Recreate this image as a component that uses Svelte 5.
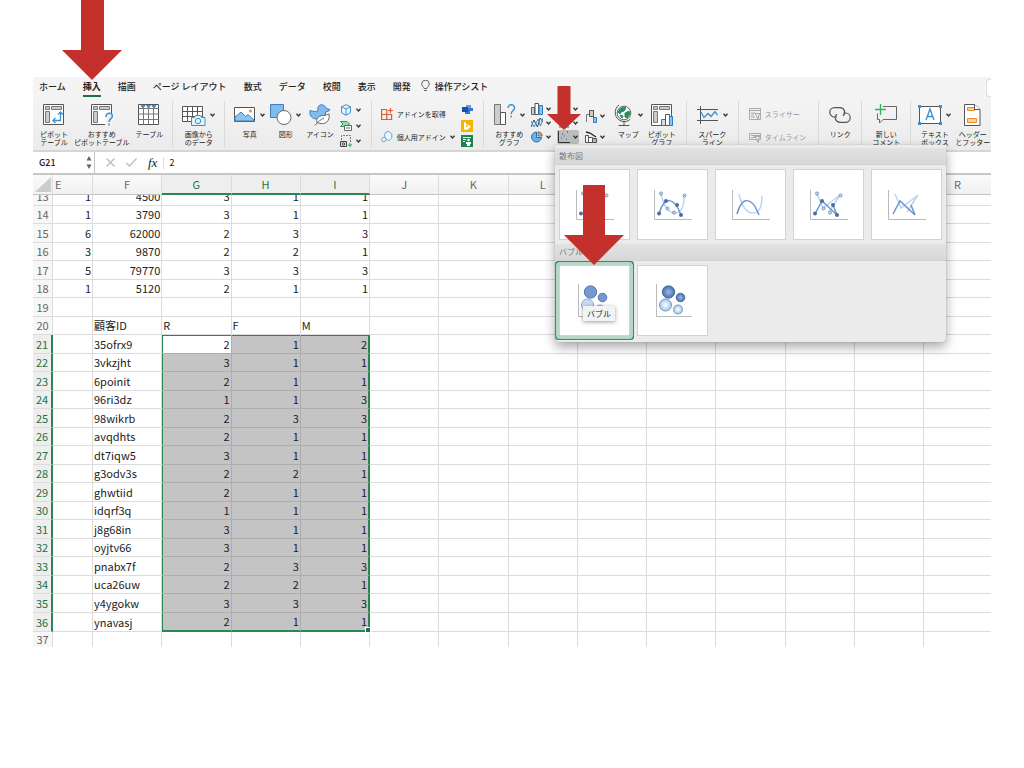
<script lang="ts">
  interface SheetRow {
    n: number;
    cells: (string | number)[];
  }

  const tabs = ['ホーム', '挿入', '描画', 'ページ レイアウト', '数式', 'データ', '校閲', '表示', '開発'];
  const columns = ['E', 'F', 'G', 'H', 'I', 'J', 'K', 'L', 'M', 'N', 'O', 'P', 'Q', 'R'];

  const rows: SheetRow[] = [
    { n: 13, cells: [1, 4500, 3, 1, 1] },
    { n: 14, cells: [1, 3790, 3, 1, 1] },
    { n: 15, cells: [6, 62000, 2, 3, 3] },
    { n: 16, cells: [3, 9870, 2, 2, 1] },
    { n: 17, cells: [5, 79770, 3, 3, 3] },
    { n: 18, cells: [1, 5120, 2, 1, 1] },
    { n: 19, cells: [] },
    { n: 20, cells: ['', '顧客ID', 'R', 'F', 'M'] },
    { n: 21, cells: ['', '35ofrx9', 2, 1, 2] },
    { n: 22, cells: ['', '3vkzjht', 3, 1, 1] },
    { n: 23, cells: ['', '6poinit', 2, 1, 1] },
    { n: 24, cells: ['', '96ri3dz', 1, 1, 3] },
    { n: 25, cells: ['', '98wikrb', 2, 3, 3] },
    { n: 26, cells: ['', 'avqdhts', 2, 1, 1] },
    { n: 27, cells: ['', 'dt7iqw5', 3, 1, 1] },
    { n: 28, cells: ['', 'g3odv3s', 2, 2, 1] },
    { n: 29, cells: ['', 'ghwtiid', 2, 1, 1] },
    { n: 30, cells: ['', 'idqrf3q', 1, 1, 1] },
    { n: 31, cells: ['', 'j8g68in', 3, 1, 1] },
    { n: 32, cells: ['', 'oyjtv66', 3, 1, 1] },
    { n: 33, cells: ['', 'pnabx7f', 2, 3, 3] },
    { n: 34, cells: ['', 'uca26uw', 2, 2, 1] },
    { n: 35, cells: ['', 'y4ygokw', 3, 3, 3] },
    { n: 36, cells: ['', 'ynavasj', 2, 1, 1] },
    { n: 37, cells: [] },
  ];

  const scatterTypes = ['markers', 'smooth-markers', 'smooth', 'lines-markers', 'lines'];

  // selection is G21:I36
  const range = { top: 21, bottom: 36, left: 2, right: 4 };

  let activeTab = $state('挿入');
  let nameBox = $state('G21');
  let formula = $state('2');
  let bubble = $state('bubble');

  const inRows = (n: number) => n >= range.top && n <= range.bottom;
  const inCols = (c: number) => c >= range.left && c <= range.right;
</script>

{#snippet caret()}
  <svg width="5" height="4" viewBox="0 0 5 4" aria-hidden="true">
    <path d="M.5 .8 2.5 3 4.5 .8" fill="none" stroke="#333" stroke-width="1.3" />
  </svg>
{/snippet}

{#snippet icon(name: string)}
  {#if name === 'pivot' || name === 'pivot-help'}
    <svg width="22" height="22" viewBox="0 0 22 22" fill="none" stroke="#555">
      <path d="M.5 .5h20v20H.5z" fill="#fff" />
      <path d="M2.5 2.5h4v3h-4zM8.5 2.5h10v3h-10zM2.5 7.5h4v11h-4z" fill="#ccc" stroke="#777" />
      {#if name === 'pivot'}
        <path d="M17.5 8v8.5H10M15 10.5 17.5 8l2.5 2.5M12.5 14 10 16.5l2.5 2.5" stroke="#3c91d2" stroke-width="1.3" />
      {:else}
        <path d="M14 9h8v13h-8z" fill="#f2f2f2" stroke="none" />
        <path d="M15 13c0-5.5 7-4.5 6.3-.5-.5 2.5-3.3 2.5-3.3 5.500m0 1.500v2" stroke="#3c91d2" stroke-width="1.5" />
      {/if}
    </svg>
  {:else if name === 'table'}
    <svg width="22" height="22" viewBox="0 0 22 22" fill="none" stroke="#555">
      <path d="M.5 .5h20v20H.5z" fill="#fff" />
      <path d="M.5 4.5h20M.5 10h20M.5 15.5h20M5.5 4.5v16M10.5 4.5v16M15.5 4.5v16" stroke="#777" />
      <path d="M3 1.5h4L5 4zM8.5 1.5h4l-2 2.5zM14 1.5h4L16 4z" fill="#3c91d2" stroke="#3c91d2" />
    </svg>
  {:else if name === 'camera'}
    <svg width="24" height="22" viewBox="0 0 24 22" fill="none" stroke="#555">
      <path d="M.5 2.5h20v15H.5z" fill="#fff" />
      <path d="M.5 7.5h20M.5 12.5h20M5.5 2.5v15M10.5 2.5v15M15.5 2.5v15" />
      <path d="M9.5 13.5h3l1-2h5l1 2H23v8H9.5z" fill="#e4f2fc" stroke="#3c91d2" />
      <circle cx="16" cy="17" r="2.7" stroke="#3c91d2" />
    </svg>
  {:else if name === 'photo'}
    <svg width="22" height="22" viewBox="0 0 22 22">
      <path d="M.5 3.5h20v14H.5z" fill="#fff" stroke="#555" />
      <path d="m1 13 6-5 4.5 4.5L14 10.5l6 5.5v1H1z" fill="#8cc4f0" stroke="#3c80bd" />
      <circle cx="16.5" cy="7" r="1.5" fill="#f08a34" />
    </svg>
  {:else if name === 'shapes'}
    <svg width="22" height="22" viewBox="0 0 22 22">
      <path d="M.5 .5h13v13H.5z" fill="#7fbdf0" stroke="#3c80bd" />
      <circle cx="14" cy="13.5" r="7" fill="#fff" stroke="#666" />
    </svg>
  {:else if name === 'duck'}
    <svg width="22" height="22" viewBox="0 0 22 22">
      <path d="M1 6.5c3 1 6 1.5 8 .5C8 2 11-.3 14.5 1.3c2 1 2.5 2 2.5 3.2l4 1c-1 2-2.500 2-4.500 2.500C17 14 12 16 7 15 1.5 14 .5 11 1 6.5z" fill="#7fbdf0" stroke="#3c80bd" />
      <path d="M8 18.500c-1.500-5 3-7 6.500-7 2 0 4-1 5.500-1.500 1.500 7-4 12-12 8.500z" fill="#fff" stroke="#666" />
      <path d="M6 21.500c3-4 6-6 9-7.500" fill="none" stroke="#666" />
    </svg>
  {:else if name === 'cube'}
    <svg width="12" height="12" viewBox="0 0 12 12" fill="#eaf5fd" stroke="#3c91d2">
      <path d="m6 .7 4.500 2v6L6 11.300 1.500 8.700v-6zM1.500 2.700 6 5l4.500-2.300M6 5v6" />
    </svg>
  {:else if name === 'smartart'}
    <svg width="12" height="12" viewBox="0 0 12 12">
      <path d="M.5 1.5H7L9.5 4 7 6.5H.5L3 4z" fill="#9bd8ae" stroke="#2f9b58" />
      <path d="M4.5 5.5h7v5h-7zM6 8h4" fill="#fff" stroke="#666" />
    </svg>
  {:else if name === 'screenshot'}
    <svg width="12" height="12" viewBox="0 0 12 12" fill="none">
      <path d="M1.5 5V.5h9V7" stroke="#777" stroke-dasharray="2 1" />
      <path d="M.5 6.5h6v5h-6z" fill="#ddd" stroke="#444" />
      <circle cx="3.5" cy="9" r="1.2" stroke="#444" />
      <path d="M10 8v4M8 10h4" stroke="#35a653" />
    </svg>
  {:else if name === 'store'}
    <svg width="12" height="12" viewBox="0 0 12 12" fill="none" stroke="#dc5a34" stroke-width="1.2">
      <path d="M6 1.5H.6v10h10V6.5H.6M5.8 1.5v10M9.5 0v5M7 2.5h5" />
    </svg>
  {:else if name === 'my-addins'}
    <svg width="12" height="12" viewBox="0 0 12 12" fill="#edf7fe" stroke="#62acdf">
      <path d="m5 1 3-.5L10.800 3v4L8 9.500 4.500 8 3.500 4z" />
      <circle cx="2.8" cy="8.5" r="2.2" />
    </svg>
  {:else if name === 'visio'}
    <svg width="12" height="12" viewBox="0 0 12 12">
      <path d="M5 1h5v4H5z" fill="#5f9be6" />
      <path d="M7 4h5v3H7zM4 7h5v3H4z" fill="#3973cf" />
      <path d="M1 3h6v5H1z" fill="#1e4faa" />
    </svg>
  {:else if name === 'bing'}
    <svg width="12" height="12" viewBox="0 0 12 12">
      <path d="M0 0h12v12H0z" fill="#f4b400" />
      <path d="m3 2 2 .7v4.500L7.500 6 5.500 5l-.5-1 4.500 1.800v1.700L5 10.300 3 9z" fill="#fff" />
    </svg>
  {:else if name === 'people'}
    <svg width="12" height="12" viewBox="0 0 12 12">
      <path d="M0 0h12v12H0z" fill="#1d8451" />
      <path d="M2 2.500h8M2 4.500h3M2 6.500h2" stroke="#fff" />
      <circle cx="7.5" cy="5" r="1.3" fill="#fff" />
      <path d="M5 7h5v2H9v2H6V9H5z" fill="#fff" />
    </svg>
  {:else if name === 'chart-help'}
    <svg width="22" height="22" viewBox="0 0 22 22" fill="none">
      <path d="M.5 .5h6v20h-6z" fill="#ccc" stroke="#777" />
      <path d="M6.5 8.5h5v12h-5z" fill="#fff" stroke="#555" />
      <path d="M14 4c0-4.500 7-4 6.500 0-.3 3-3.300 2.500-3.300 6m0 1.500v2" stroke="#3c91d2" stroke-width="1.4" />
    </svg>
  {:else if name === 'bars'}
    <svg width="12" height="12" viewBox="0 0 12 12">
      <path d="M.5 4.5h3v7h-3z" fill="#ccc" stroke="#666" />
      <path d="M4 .5h3.500v11H4z" fill="#fff" stroke="#555" />
      <path d="M8 2.5h3.500v9H8z" fill="#8cc4f0" stroke="#2d7dc2" />
    </svg>
  {:else if name === 'line'}
    <svg width="12" height="12" viewBox="0 0 12 12" fill="none">
      <path d="m0 10 3-7 3.500 7L9 1l3 4" stroke="#444" />
      <path d="m0 4 3 6 4-8 2.500 7L12 1" stroke="#3c91d2" />
    </svg>
  {:else if name === 'pie'}
    <svg width="12" height="12" viewBox="0 0 12 12" stroke="#2d6ea8">
      <path d="M5.5 1A5 5 0 1 0 10.500 6.500h-5z" fill="#68b2ee" />
      <path d="M7 .7A4.500 4.500 0 0 1 11.300 5H7z" fill="#aaa" stroke="#777" />
    </svg>
  {:else if name === 'area'}
    <svg width="12" height="12" viewBox="0 0 12 12">
      <path d="M1 1h10v10H1z" fill="#68b2ee" />
    </svg>
  {:else if name === 'scatter'}
    <svg width="12" height="12" viewBox="0 0 12 12" fill="none">
      <path d="M.5 0v11.500H12" stroke="#333" />
      <path d="M3 7h1M6 5h1M8 8h1" stroke="#3c91d2" stroke-width="1.5" />
      <path d="M4 3h1M9 1h1" stroke="#333" />
    </svg>
  {:else if name === 'waterfall'}
    <svg width="12" height="13" viewBox="0 0 12 13">
      <path d="M1.500 12V4.500h3" fill="none" stroke="#777" />
      <path d="M4.500 .5h4v6h-4z" fill="#ccc" stroke="#555" />
      <path d="M8.500 .5v12" stroke="#555" />
      <path d="M8.500 7.500h3v5h-3z" fill="#8cc4f0" stroke="#2d7dc2" />
    </svg>
  {:else if name === 'combo'}
    <svg width="12" height="12" viewBox="0 0 12 12" fill="#fff" stroke="#555">
      <path d="M.5 4.500h3v7h-3zM3.500 6.500h4v5h-4z" />
      <path d="M7.500 7.500h4v4h-4z" fill="#8cc4f0" />
      <path d="m1 1 4 1 6 4" fill="none" stroke="#222" stroke-width="1.3" />
    </svg>
  {:else if name === 'globe'}
    <svg width="20" height="22" viewBox="0 0 20 22" fill="none">
      <circle cx="10" cy="9" r="6.8" fill="#fff" stroke="#666" />
      <path d="M6 5c2-2 5-2 6-1l-2 3-3 1-1 2-2-2zM11 9l4-2 1 3-3 4-2-1zM6 11l3 1-1 2z" fill="#23905a" stroke="#23905a" />
      <path d="M5 1C-1 5 0 16 9 17.500c3 .4 5-.5 7-2M10 18v3M4.500 21.500h11" stroke="#555" />
    </svg>
  {:else if name === 'pivot-chart'}
    <svg width="22" height="22" viewBox="0 0 22 22">
      <path d="M.5 .5h20v21H.5z" fill="#fff" stroke="#555" />
      <path d="M2.5 2.5h4v3h-4zM8.5 2.5h10v3h-10zM2.5 7.5h4v11h-4z" fill="#ccc" stroke="#777" />
      <path d="M10.500 15.500h4v6h-4z" fill="#ddd" stroke="#666" />
      <path d="M14.500 10.500h4v11h-4z" fill="#fff" stroke="#555" />
      <path d="M18.500 12.500h3v9h-3z" fill="#8cc4f0" stroke="#2d7dc2" />
    </svg>
  {:else if name === 'sparkline'}
    <svg width="22" height="22" viewBox="0 0 22 22" fill="none">
      <path d="M3.500 2v18M0 5.500h21M0 16.500h21" stroke="#555" />
      <path d="m4 8 3 5.500 4-4 3 3 4-5 2.500 3.500" stroke="#3c91d2" stroke-width="1.3" />
    </svg>
  {:else if name === 'slicer' || name === 'timeline'}
    <svg width="12" height="12" viewBox="0 0 12 12" fill="none" stroke="#aaa">
      {#if name === 'slicer'}
        <path d="M.5 .5h11v11H.5zM.5 2.500h11M2 5h4M2 7h3M2 9h4" />
      {:else}
        <path d="M.5 2.500h11v6H.5zM2 4.500h9M2 6.500h4" />
      {/if}
      <path d="M5.500 5.500h6L9.500 8v3.500L8 10V8z" fill="#eee" />
    </svg>
  {:else if name === 'link'}
    <svg width="22" height="22" viewBox="0 0 22 22" fill="none" stroke="#555" stroke-width="1.2">
      <path d="M8 13H5.500a4.700 4.700 0 0 1 0-9.400h5.500a4.700 4.700 0 0 1 3 8.300" />
      <path d="M14.500 9h2a4.700 4.700 0 0 1 0 9.400H11a4.700 4.700 0 0 1-3-8.300" />
    </svg>
  {:else if name === 'comment'}
    <svg width="22" height="22" viewBox="0 0 22 22" fill="none">
      <path d="M8 2.500h13.500v13H8L4.500 19v-3.500H2.500v-6" stroke="#666" />
      <path d="M5.500 0v11M0 5.500h11" stroke="#35b05a" stroke-width="1.3" />
    </svg>
  {:else if name === 'textbox'}
    <svg width="24" height="22" viewBox="0 0 24 22" fill="none">
      <path d="M1.500 2.500h21v17h-21z" fill="#fff" stroke="#555" />
      <path d="m8 16 4-11 4 11M9.500 12.500h5" stroke="#3c91d2" stroke-width="1.4" />
      <path d="M0 1h3v3H0zM21 1h3v3h-3zM0 18h3v3H0zM21 18h3v3h-3z" fill="#3c91d2" />
    </svg>
  {:else if name === 'header-footer'}
    <svg width="17" height="22" viewBox="0 0 17 22">
      <path d="M.5 .5h10l5.500 5v16H.5z" fill="#fff" stroke="#555" />
      <path d="M3.500 3.500h7v3h-7zM3.500 14.500h9v4h-9z" fill="#fbd19a" stroke="#ec8a2d" />
      <path d="M10.500 .5v5H16" fill="#fff" stroke="#555" />
    </svg>
  {/if}
{/snippet}

{#snippet big(name: string, lines: string[], menu = false)}
  <button type="button" class="big">
    <span class="art">{@render icon(name)}{#if menu}{@render caret()}{/if}</span>
    <span class="label">{lines[0]}{#if lines[1]}<br />{lines[1]}{/if}</span>
  </button>
{/snippet}

{#snippet mini(name: string, title: string, active = false)}
  <button type="button" class="mini" class:active aria-label={title}>
    {@render icon(name)}{@render caret()}
  </button>
{/snippet}

{#snippet plot(name: string)}
  <svg width="69" height="69" viewBox="0 0 69 69" fill="none" aria-hidden="true">
    {#if name.startsWith('bubble')}
      <path d="M18.500 18v32.500H54" stroke="#bbb" />
      {#if name === 'bubble'}
        <g stroke="#5578b0">
          <circle cx="30.500" cy="26" r="6.2" fill="#7498d0" />
          <circle cx="42.500" cy="31.500" r="4.3" fill="#7498d0" />
          <circle cx="27.500" cy="39" r="6" fill="#c5dcf5" stroke="#86a9d0" />
          <circle cx="40" cy="43.500" r="4.500" fill="#c5dcf5" stroke="#86a9d0" />
        </g>
      {:else}
        <defs>
          <radialGradient id="deep"><stop stop-color="#9db9e4" /><stop offset="1" stop-color="#466fae" /></radialGradient>
          <radialGradient id="pale"><stop stop-color="#fff" /><stop offset="1" stop-color="#9fc9ef" /></radialGradient>
        </defs>
        <circle cx="30.500" cy="26" r="6.2" fill="url(#deep)" stroke="#4a6ea5" />
        <circle cx="42.500" cy="31.500" r="4.3" fill="url(#deep)" stroke="#4a6ea5" />
        <circle cx="27.500" cy="39" r="6" fill="url(#pale)" stroke="#7799bd" />
        <circle cx="40" cy="43.500" r="4.500" fill="url(#pale)" stroke="#7799bd" />
      {/if}
    {:else}
      <path d="M16.500 20v29.500H54" stroke="#bbb" />
      {#if name.startsWith('smooth')}
        <path d="M23 24c3 13 7 19 14 19 6 0 9-6 9-17" stroke="#bad6f3" stroke-width="1.5" />
        <path d="M21 44c5-18 15-18 22 1" stroke="#6e94cb" stroke-width="1.5" />
      {:else if name.startsWith('lines')}
        <path d="m23 24 6 14 17-13-11 17" stroke="#bad6f3" stroke-width="1.5" />
        <path d="m21 44 7-13 15 14-4-10" stroke="#6e94cb" stroke-width="1.5" />
      {/if}
      {#if name.endsWith('markers')}
        <g fill="#c5dcf5" stroke="#7792bd">
          <circle cx="23" cy="23.500" r="1.5" /><circle cx="29.500" cy="38.500" r="1.5" />
          <circle cx="36" cy="42.500" r="1.5" /><circle cx="46.500" cy="25.500" r="1.5" />
        </g>
        <g fill="#4b6da6">
          <circle cx="21" cy="43.500" r="2" /><circle cx="28" cy="31" r="2" />
          <circle cx="39" cy="35" r="2" /><circle cx="43" cy="45" r="2" />
        </g>
      {/if}
    {/if}
  </svg>
{/snippet}

<main class="window">
  <nav class="tabs" aria-label="リボン">
    {#each tabs as tab (tab)}
      <button type="button" class:current={tab === activeTab} onclick={() => (activeTab = tab)}>{tab}</button>
    {/each}
    <button type="button" class="assist">
      <svg width="9" height="12" viewBox="0 0 9 12" fill="none" stroke="#666" aria-hidden="true">
        <path d="M3 8.500C3 7 .7 6 .7 4a3.800 3.800 0 0 1 7.600 0C8.300 6 6 7 6 8.500zM3 10.500h3" />
      </svg>
      操作アシスト
    </button>
    <span class="share"></span>
  </nav>

  <div class="ribbon">
    <div class="group pivots">
      {@render big('pivot', ['ピボット', 'テーブル'])}
      {@render big('pivot-help', ['おすすめ', 'ピボットテーブル'])}
      {@render big('table', ['テーブル'])}
    </div>
    <div class="group">
      {@render big('camera', ['画像から', 'のデータ'], true)}
    </div>
    <div class="group">
      {@render big('photo', ['写真'], true)}
      {@render big('shapes', ['図形'], true)}
      {@render big('duck', ['アイコン'])}
      <div class="stack">
        {@render mini('cube', '3D モデル')}
        {@render mini('smartart', 'SmartArt')}
        {@render mini('screenshot', 'スクリーンショット')}
      </div>
    </div>
    <div class="group">
      <div class="stack wide">
        <button type="button" class="row">{@render icon('store')}アドインを取得</button>
        <button type="button" class="row">{@render icon('my-addins')}個人用アドイン{@render caret()}</button>
      </div>
      <div class="stack">
        <button type="button" class="mini" aria-label="Visio">{@render icon('visio')}</button>
        <button type="button" class="mini" aria-label="Bing">{@render icon('bing')}</button>
        <button type="button" class="mini" aria-label="People Graph">{@render icon('people')}</button>
      </div>
    </div>
    <div class="group charts">
      {@render big('chart-help', ['おすすめ', 'グラフ'], true)}
      <div class="stack dense">
        {@render mini('bars', '棒')}
        {@render mini('line', '折れ線')}
        {@render mini('pie', '円')}
      </div>
      <div class="stack dense">
        {@render mini('bars', '階層構造')}
        {@render mini('area', '統計')}
        {@render mini('scatter', '散布図', true)}
      </div>
      <div class="stack pair">
        {@render mini('waterfall', 'ウォーターフォール')}
        {@render mini('combo', '組み合わせ')}
      </div>
      {@render big('globe', ['マップ'], true)}
      {@render big('pivot-chart', ['ピボット', 'グラフ'])}
    </div>
    <div class="group">
      {@render big('sparkline', ['スパーク', 'ライン'], true)}
    </div>
    <div class="group">
      <div class="stack wide filters">
        <button type="button" class="row" disabled>{@render icon('slicer')}スライサー</button>
        <button type="button" class="row" disabled>{@render icon('timeline')}タイムライン</button>
      </div>
    </div>
    <div class="group">
      {@render big('link', ['リンク'])}
    </div>
    <div class="group">
      {@render big('comment', ['新しい', 'コメント'])}
    </div>
    <div class="group texts">
      {@render big('textbox', ['テキスト', 'ボックス'], true)}
      {@render big('header-footer', ['ヘッダー', 'とフッター'])}
    </div>
  </div>

  <div class="formula">
    <div class="name">
      <input aria-label="名前ボックス" bind:value={nameBox} />
      <svg width="6" height="13" viewBox="0 0 6 13" fill="#666" aria-hidden="true">
        <path d="m3 0 2.500 4.500h-5zM3 13 .5 8.500h5z" />
      </svg>
    </div>
    <button type="button" aria-label="キャンセル">
      <svg width="9" height="9" viewBox="0 0 9 9" stroke="#bbb" stroke-width="1.3"><path d="m.5 .5 8 8M8.500 .5l-8 8" /></svg>
    </button>
    <button type="button" aria-label="入力">
      <svg width="11" height="9" viewBox="0 0 11 9" fill="none" stroke="#bbb" stroke-width="1.3"><path d="m.5 5 3 3 7-7.500" /></svg>
    </button>
    <button type="button" class="fx">fx</button>
    <input class="value" aria-label="数式バー" bind:value={formula} />
  </div>

  <table>
    <colgroup>
      <col class="col-num" />
      <col class="col-e" />
      {#each columns.slice(1, -1) as c (c)}<col />{/each}
      <col class="col-r" />
    </colgroup>
    <thead>
      <tr>
        <th class="corner"><svg width="16" height="15" viewBox="0 0 16 15" aria-hidden="true"><path d="M16 0v15H0z" fill="#ccc" /></svg></th>
        {#each columns as c, i (c)}
          <th scope="col" class:on={inCols(i)} class:edge={i === 0}>{c}</th>
        {/each}
      </tr>
    </thead>
    <tbody>
      {#each rows as row (row.n)}
        <tr class:first={row.n === 13} class:last={row.n === 37}>
          <th scope="row" class:on={inRows(row.n)}><div>{row.n}</div></th>
          {#each columns as c, i (c)}
            {@const sel = inRows(row.n) && inCols(i)}
            <td
              class:num={typeof row.cells[i] === 'number'}
              class:sel
              class:origin={sel && row.n === range.top && i === range.left}
              class:top={sel && row.n === range.top}
              class:left={sel && i === range.left}
              class:right={sel && i === range.right}
              class:bottom={sel && row.n === range.bottom}
            ><div>{row.cells[i] ?? ''}</div></td>
          {/each}
        </tr>
      {/each}
    </tbody>
  </table>

  <section class="gallery" aria-label="散布図とバブル">
    <h2>散布図</h2>
    <div class="choices">
      {#each scatterTypes as type (type)}
        <button type="button" aria-label={type}>{@render plot(type)}</button>
      {/each}
    </div>
    <h2>バブル</h2>
    <div class="choices">
      {#each ['bubble', 'bubble-3d'] as type (type)}
        <button type="button" class:picked={bubble === type} aria-label={type} onclick={() => (bubble = type)}>
          {@render plot(type)}
        </button>
      {/each}
    </div>
    <span class="tip" role="tooltip">バブル</span>
  </section>

  <svg class="arrow to-tab" width="60" height="80" viewBox="0 0 60 80" aria-hidden="true"><path d="M19 0h23v50h18L30 80 0 50h19z" /></svg>
  <svg class="arrow to-chart" width="34" height="44" viewBox="0 0 34 44" aria-hidden="true"><path d="M10.500 0h13v28H34L17 44 0 28h10.500z" /></svg>
  <svg class="arrow to-bubble" width="60" height="80" viewBox="0 0 60 80" aria-hidden="true"><path d="M19 0h22v50h19L30 80 0 50h19z" /></svg>
</main>

<style>
  :global(body) {
    background: #fff;
  }

  .window {
    position: relative;
    margin: 77px 33px 0;
    font-family: 'Noto Sans CJK JP', sans-serif;
    color: #222;
  }

  button,
  input {
    margin: 0;
    padding: 0;
    border: 0;
    background: none;
    font: inherit;
    color: inherit;
  }

  svg {
    display: block;
    flex: none;
  }

  .tabs {
    display: flex;
    gap: 17px;
    height: 22px;
    padding-left: 6px;
    background: #f4f4f4;
    font-size: 9px;
    font-weight: 500;
    overflow: hidden;
  }

  .tabs button {
    height: 20px;
    white-space: nowrap;
    border-bottom: 2px solid transparent;
  }

  .tabs .current {
    border-color: #1e7145;
    font-weight: 700;
  }

  .tabs .assist {
    display: flex;
    align-items: center;
    gap: 5px;
    margin-left: -7px;
  }

  .share {
    width: 4px;
    margin: 2px 0 2px auto;
    border: 1px solid #ddd;
    border-right: 0;
    border-radius: 3px 0 0 3px;
    background: #fff;
  }

  .ribbon {
    display: flex;
    height: 53px;
    background: linear-gradient(#f4f4f4, #ebebeb);
    border-bottom: 2px solid #d6d6d6;
    box-sizing: border-box;
    overflow: hidden;
    font-size: 7px;
    line-height: 8px;
  }

  .group {
    display: flex;
    flex: none;
    gap: 5px;
    height: 47px;
    margin-top: 2px;
    padding: 0 9px;
    border-right: 1px solid #dadada;
  }

  .charts,
  .charts ~ .group {
    padding: 0 10px;
  }

  .group.pivots {
    gap: 6px;
    padding-left: 7px;
  }

  .group.texts {
    gap: 4px;
    padding: 0 0 0 7px;
    border: 0;
  }

  .big {
    display: flex;
    flex-direction: column;
    align-items: center;
    gap: 4px;
    padding-top: 3px;
    white-space: nowrap;
  }

  .art {
    display: flex;
    align-items: center;
    gap: 4px;
  }

  .label {
    text-align: center;
  }

  .stack {
    display: flex;
    flex-direction: column;
    justify-content: space-between;
    padding-top: 2px;
  }

  .stack.dense {
    justify-content: flex-start;
    padding-top: 1px;
  }

  .stack.pair {
    justify-content: flex-start;
    gap: 7px;
    margin-right: 3px;
    padding-top: 8px;
  }

  .stack.wide {
    justify-content: flex-start;
    gap: 9px;
    padding-top: 6px;
  }

  .stack.filters {
    padding-right: 2px;
  }

  .mini {
    display: flex;
    align-items: center;
    gap: 4px;
    height: 14px;
    padding: 0 1px;
    border-radius: 2px;
  }

  .charts .mini {
    gap: 3px;
  }

  .mini.active {
    background: #bdbdbd;
  }

  .row {
    display: flex;
    align-items: center;
    gap: 4px;
    height: 14px;
    white-space: nowrap;
  }

  .row:disabled {
    color: #999;
  }

  .formula {
    display: flex;
    align-items: center;
    gap: 11px;
    height: 21px;
    background: #fff;
    border-bottom: 2px solid #c6c6c6;
    font-size: 9px;
  }

  .name {
    display: flex;
    align-items: center;
    width: 53px;
    height: 21px;
    padding: 0 2px 0 6px;
    border-right: 1px solid #c6c6c6;
  }

  .name input {
    flex: 1;
    min-width: 0;
    font-weight: 500;
  }

  .fx {
    font-family: 'Liberation Serif', serif;
    font-size: 13px;
    font-style: italic;
  }

  .value {
    flex: 1;
    margin-left: -5px;
    padding-left: 5px;
    border-left: 1px solid #ddd;
    line-height: 12px;
  }

  table {
    width: 100%;
    table-layout: fixed;
    border-collapse: separate;
    border-spacing: 0;
    font-size: 11px;
  }

  .col-num {
    width: 20px;
  }

  .col-e {
    width: 40px;
  }

  .col-r {
    width: 67px;
  }

  th,
  td {
    box-sizing: border-box;
    height: 18px;
    padding: 0;
    line-height: 17px;
    border-right: 1px solid #dcdcdc;
    border-bottom: 1px solid #dcdcdc;
    white-space: nowrap;
  }

  tbody tr:nth-child(odd) > * {
    height: 19px;
  }

  tr > :last-child {
    border-right: 0;
  }

  th {
    font-weight: 400;
    color: #666;
    background: #f7f7f7;
  }

  thead th {
    height: 20px;
    background: linear-gradient(#fafafa, #f1f1f1);
    border-bottom-color: #c4c4c4;
  }

  th.edge {
    padding-left: 2px;
    text-align: left;
  }

  th.on {
    color: #1e7145;
    background: #eee;
  }

  thead th.on {
    border-bottom: 2px solid #2d8555;
  }

  tbody th.on {
    border-right: 2px solid #2d8555;
  }

  .corner svg {
    margin-left: 2px;
  }

  td {
    padding: 0 1px;
    text-align: left;
  }

  td.num {
    text-align: right;
  }

  /* scrolled partly under the column headers */
  tbody tr.first > * {
    height: 11px;
  }

  .first div {
    display: flex;
    align-items: flex-end;
    justify-content: flex-end;
    height: 10px;
    overflow: hidden;
  }

  .first th div {
    justify-content: center;
  }

  tbody tr.last > * {
    height: 15px;
    line-height: 15px;
    border-bottom: 0;
  }

  .sel {
    background: #c4c4c4;
    border-color: #adadad;
  }

  .origin {
    background: #fff;
  }

  .top {
    box-shadow: inset 0 1px #2d8555;
  }

  .left {
    box-shadow: inset 1px 0 #2d8555;
  }

  .top.left {
    box-shadow: inset 1px 1px #2d8555;
  }

  .right {
    border-right: 2px solid #2d8555;
  }

  .bottom {
    border-bottom: 2px solid #2d8555;
  }

  .bottom.right {
    position: relative;
  }

  .bottom.right::after {
    content: '';
    position: absolute;
    right: -3px;
    bottom: -3px;
    width: 4px;
    height: 4px;
    background: #1e7145;
    border: 1px solid #fff;
  }

  .gallery {
    position: absolute;
    top: 68px;
    left: 522px;
    width: 391px;
    padding: 3px 0 2px;
    box-sizing: border-box;
    background: #ebebeb;
    border-radius: 0 0 4px 4px;
    box-shadow: 0 0 1px #888, 0 5px 12px rgb(0 0 0 / 35%);
  }

  h2 {
    margin: 0;
    padding-left: 4px;
    font-size: 8px;
    font-weight: 400;
    line-height: 16px;
    color: #777;
    background: linear-gradient(#e2e2e2, #d8d8d8);
    border-bottom: 1px solid #d2d2d2;
  }

  .choices {
    display: flex;
    gap: 7px;
    padding: 4px;
  }

  .choices button {
    width: 71px;
    height: 71px;
    box-sizing: border-box;
    border: 1px solid #d2d2d2;
    background: #fff;
  }

  .choices .picked {
    outline: 3px solid #b6d6c6;
    box-shadow: 0 0 0 4px #2f9362;
    border-radius: 1px;
  }

  .tip {
    position: absolute;
    top: 161px;
    left: 28px;
    padding: 0 4px;
    font-size: 8px;
    line-height: 15px;
    background: #f3f3f3;
    box-shadow: 0 1px 4px rgb(0 0 0 / 40%);
  }

  .arrow {
    position: absolute;
    fill: #c4302b;
    pointer-events: none;
  }

  .to-tab {
    top: -77px;
    left: 29px;
  }

  .to-chart {
    top: 9px;
    left: 514px;
  }

  .to-bubble {
    top: 108px;
    left: 531px;
  }
</style>
